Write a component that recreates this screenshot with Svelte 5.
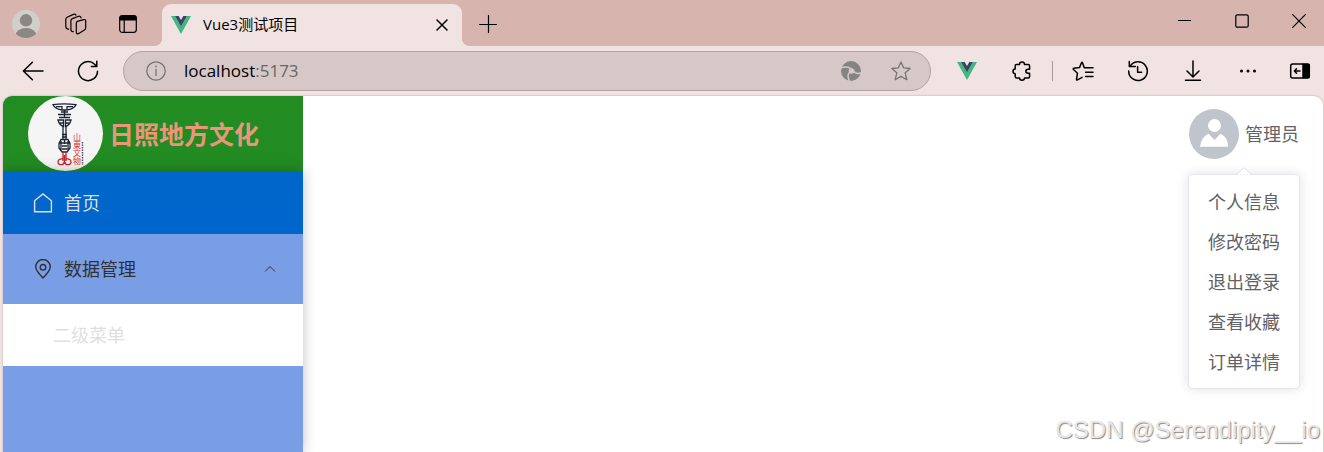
<script lang="ts">
	let submenuOpen = $state(true)
	let userMenuOpen = $state(true)

	const userMenu = ['个人信息', '修改密码', '退出登录', '查看收藏', '订单详情']
</script>

{#snippet vueLogo()}
	<svg width="20" height="18" viewBox="0 0 20 18">
		<path fill="#41b883" d="M0 0h4l6 10.4L16 0h4L10 18z" />
		<path fill="#34495e" d="M4 0h3.7L10 4l2.3-4H16l-6 10.4z" />
	</svg>
{/snippet}

<div class="browser">
	<header class="tab-strip">
		<button class="tool" aria-label="用户配置">
			<svg width="28" height="28" viewBox="0 0 28 28">
				<defs><clipPath id="profile"><circle cx="14" cy="14" r="14" /></clipPath></defs>
				<g clip-path="url(#profile)">
					<path fill="#d1cfca" d="M0 0h28v28H0z" />
					<circle cx="14" cy="10.3" r="6.2" fill="#8b8883" />
					<ellipse cx="14" cy="25.5" rx="10.5" ry="7.5" fill="#8b8883" />
				</g>
			</svg>
		</button>
		<button class="tool workspaces" aria-label="工作区">
			<svg class="line thin" width="22" height="22" viewBox="0 0 22 22">
				<path d="m12.400 8.400 6.200-1.800q2.100-.5 2.100 1.400v7q0 1.500-1.400 2.100l-5.400 3.300q-2.600 1.200-2.600-1.400v-8.700q0-1.500 1.100-1.900z" />
				<path d="M8.300 18.600q-2.400 0-2.400-2.200V7.600q0-1.500 1.500-2l6.200-2.300q2-.5 2.500 1.500" />
				<path d="M3.600 16.200q-2.800-.4-2.800-2.800V6.600q0-1.800 1.700-2.600l6-2.600q1.600-.6 2.500.7" />
			</svg>
		</button>
		<button class="tool" aria-label="标签页操作">
			<svg class="line thin" width="20" height="20" viewBox="0 0 20 20">
				<rect x="1.700" y="1.700" width="16.600" height="16.600" rx="2.500" />
				<path fill="#000" d="M2 3.500Q2 2 3.500 2h13Q18 2 18 3.500V6H2zM6.200 6v12" />
			</svg>
		</button>
		<div class="tab">
			{@render vueLogo()}
			<span class="tab-title">Vue3测试项目</span>
			<button class="tab-close" aria-label="关闭标签页">
				<svg class="line" width="12" height="12" viewBox="0 0 12 12"><path d="m1 1 10 10M11 1 1 11" /></svg>
			</button>
		</div>
		<button class="tool new-tab" aria-label="新建标签页">
			<svg class="line thin" width="18" height="18" viewBox="0 0 18 18"><path d="M9.500.5v17M.5 9.500h17" /></svg>
		</button>
		<div class="window-controls">
			<button class="tool" aria-label="最小化">
				<svg class="line thin" width="14" height="14" viewBox="0 0 14 14"><path d="M.5 6.500h12" /></svg>
			</button>
			<button class="tool" aria-label="最大化">
				<svg class="line thin" width="14" height="14" viewBox="0 0 14 14"><rect x=".8" y=".8" width="12.400" height="12.400" rx="1.500" /></svg>
			</button>
			<button class="tool" aria-label="关闭">
				<svg class="line thin" width="14" height="14" viewBox="0 0 14 14"><path d="m.7.7 12.600 12.600M13.300.7.7 13.300" /></svg>
			</button>
		</div>
	</header>

	<div class="toolbar">
		<div class="group">
			<button class="tool" aria-label="返回">
				<svg class="line" width="22" height="20" viewBox="0 0 22 20"><path d="M21 10H1.400M10.400 1.200 1.400 10l9 8.800" /></svg>
			</button>
			<button class="tool" aria-label="刷新">
				<svg class="line" width="22" height="22" viewBox="0 0 22 22">
					<path d="M20.500 11.200A9.500 9.500 0 1 1 17.600 4.300L19.700 6.400M19.800 1.200v5.400h-5.500" />
				</svg>
			</button>
		</div>
		<div class="address">
			<svg class="line grey" width="20" height="20" viewBox="0 0 20 20">
				<circle cx="10" cy="10" r="9.200" />
				<path d="M10 8.600v6" /><path d="M10 5v1" />
			</svg>
			<label class="url">
				<input value="localhost" aria-label="地址栏" />
				<span>:5173</span>
			</label>
			<button class="tool" aria-label="扩展页面">
				<svg width="20" height="20" viewBox="0 0 20 20">
					<circle cx="10" cy="10" r="10" fill="#858483" />
					<circle cx="10.500" cy="10" r="2.800" fill="#d6c8c7" />
					<g fill="none" stroke="#d6c8c7" stroke-width="1.500">
						<path d="M10.500 7.800Q6 4.600-.5 7" />
						<path d="M12.400 9.500q2 4.500 8.100 2.200" />
						<path d="M8.800 11q-3.600 4 .2 9.500" />
					</g>
				</svg>
			</button>
			<button class="tool" aria-label="收藏此页">
				<svg class="line grey" width="20" height="20" viewBox="0 0 20 20">
					<path d="m10 1 2.600 5.800 6.500.7-4.900 4.300 1.600 6.900L10 15.400l-5.800 3.300 1.600-6.900L.9 7.500l6.500-.7z" />
				</svg>
			</button>
		</div>
		<div class="group">
			<button class="tool" aria-label="Vue 开发工具">{@render vueLogo()}</button>
			<button class="tool" aria-label="扩展">
				<svg class="line" width="20" height="20" viewBox="0 0 20 20">
					<path d="M4.200 3.500h3.300q0-2.500 2.500-2.500t2.500 2.500h3.600q1.500 0 1.500 1.500v3.200h-1.500q-2.300.2-2.300 2t2.300 2h1.500V15.500q0 1.500-1.500 1.500h-3.600q0 2.200-2.500 2.200T7.500 17H4.700q-1.500 0-1.500-1.500v-2.800Q1 12.700 1 10.300t2.200-2.400V5q0-1.500 1-1.500z" />
				</svg>
			</button>
		</div>
		<span class="divider"></span>
		<div class="group">
			<button class="tool" aria-label="收藏夹">
				<svg class="line" width="22" height="20" viewBox="0 0 22 20">
					<path d="M12.200 6.600 10.600 2q-.6-1.500-1.200 0L7.500 6.600 2 7.300q-1.400.3-.5 1.200l4 3.700-1 6q0 1.300 1 .6l4.600-2.500M12.200 6.800H21M13.600 11.200H21M13.600 15.600H21" />
				</svg>
			</button>
			<button class="tool" aria-label="历史记录">
				<svg class="line" width="22" height="22" viewBox="0 0 22 22">
					<path d="M2.300 1.600V6.500h6M3 6.400A9.300 9.300 0 1 1 1.700 11M10.600 6.500v5.800h4" />
				</svg>
			</button>
			<button class="tool" aria-label="下载">
				<svg class="line" width="18" height="22" viewBox="0 0 18 22"><path d="M9 1v15.500M3 11l6 6 6-6M1.500 20.300h15" /></svg>
			</button>
			<button class="tool" aria-label="设置及其他">
				<svg width="18" height="4" viewBox="0 0 18 4"><circle cx="2.500" cy="2" r="1.500" /><circle cx="9" cy="2" r="1.500" /><circle cx="15.500" cy="2" r="1.500" /></svg>
			</button>
		</div>
		<button class="tool side-panel" aria-label="侧边栏">
			<svg class="line" width="22" height="18" viewBox="0 0 22 18">
				<rect x="1.700" y="2" width="18.600" height="14" rx="2" />
				<path fill="#000" d="M14 2.500h6v13h-6z" />
				<path d="M11 9H5.500M7.500 6.800 5.400 9l2.100 2.200" />
			</svg>
		</button>
	</div>

	<div class="page">
		<aside>
			<div class="brand">
				<svg class="brand-logo" viewBox="0 0 75 75">
					<circle cx="37.500" cy="37.500" r="37.500" fill="#f5f5f5" />
					<g fill="none" stroke="#1c2433" stroke-width="1.300">
						<path d="M25 8.700q11-1.500 23 0-2 4.500-9.500 5.300h-4Q27 13 25 8.700zM28 10.600h6v3M45 10.600h-6v3" />
						<path d="M33 16h7M30 18.500h13M36.500 14v8M31 21.500h11M30 24h5.500v6.500q-4-1-5.500-6.500zM43 24h-5.500v6.500q4-1 5.500-6.500zM32 27h3M38 27h3" />
						<path d="M35 30v13M38 30v13M34 38.500h5M34 41h5" />
						<path d="M33 43.500h7l2 4v4.500l-3 4h-5l-3-4v-4.500zM31 47h11M33 45v9M40 45v9M34 50h5M34 53h5M36.500 43v5" />
					</g>
					<g fill="none" stroke="#c8202a" stroke-width="1.300">
						<path d="M35 55v10M38 55v10M36.500 59v9" />
						<path d="M35 63q-5-.5-5 3t5 2.500q0-2 1.500-2t1.500 2q5 1 5-2.500t-5-3" />
					</g>
					<text class="seal" x="49" y="37">山東文物</text>
					<path d="M54.500 46v23" stroke="#555" stroke-width="1.500" stroke-dasharray="1.500 1" />
				</svg>
				<h1>日照地方文化</h1>
			</div>
			<nav class="menu">
				<a class="menu-item active" href="#home">
					<svg class="icon" viewBox="0 0 20 20"><path d="M1.600 7.800 10 1l8.400 6.800v11H1.600z" /></svg>
					<span>首页</span>
				</a>
				<button class="menu-item group-title" aria-expanded={submenuOpen} onclick={() => (submenuOpen = !submenuOpen)}>
					<svg class="icon" viewBox="0 0 20 20">
						<path d="M10 18.900C5.500 14.500 2.700 11.500 2.700 7.800a7.300 7.300 0 0 1 14.600 0c0 3.700-2.800 6.700-7.300 11.100z" />
						<circle cx="10" cy="8.300" r="2.800" />
					</svg>
					<span>数据管理</span>
					<svg class="arrow" class:closed={!submenuOpen} viewBox="0 0 14 14"><path d="m2 9.500 5-5 5 5" /></svg>
				</button>
				{#if submenuOpen}
					<a class="menu-item sub" href="#second"><span>二级菜单</span></a>
				{/if}
			</nav>
		</aside>

		<main>
			<div class="user">
				<button class="user-trigger" aria-expanded={userMenuOpen} onclick={() => (userMenuOpen = !userMenuOpen)}>
					<svg width="50" height="50" viewBox="0 0 50 50">
						<circle cx="25" cy="25" r="25" fill="#c0c4cc" />
						<circle cx="25.500" cy="16.500" r="6.500" fill="#fff" />
						<path fill="#fff" d="M11 37.700q1-9.500 8.500-13l6 6.300 6-6.300q7.500 3.500 7.700 13z" />
					</svg>
					<span>管理员</span>
				</button>
				{#if userMenuOpen}
					<div class="dropdown">
						{#each userMenu as item}
							<button class="dropdown-item">{item}</button>
						{/each}
					</div>
				{/if}
			</div>
		</main>
	</div>

	<div class="watermark">CSDN @Serendipity__io</div>
</div>

<style>
	:global(body) {
		margin: 0;
	}

	.browser {
		position: relative;
		display: flex;
		flex-direction: column;
		min-height: 100vh;
		overflow: hidden;

		background: #f1e3e1;
		color: #606266;
		font-family: "Open Sans", "Noto Sans CJK SC", sans-serif;
		font-size: 18px;
	}

	button {
		padding: 0;
		border: 0;
		background: none;
		color: inherit;
		font: inherit;
		cursor: pointer;
	}

	svg {
		display: block;
		flex-shrink: 0;
	}

	.line {
		fill: none;
		stroke: #000;
		stroke-width: 1.5;
		stroke-linecap: round;
		stroke-linejoin: round;
	}

	.thin {
		stroke-width: 1.2;
	}

	.grey {
		stroke: #777473;
		stroke-width: 1.3;
	}

	.tool {
		display: flex;
		align-items: center;
		justify-content: center;
		flex-shrink: 0;
		width: 40px;
		height: 40px;
	}

	.tab-strip {
		display: flex;
		align-items: center;
		gap: 11px;
		height: 46px;
		padding: 2px 5px 0 6px;
		box-sizing: border-box;
		background: #d8b4ae;
	}

	.workspaces {
		margin: 0 1px 0 -1px;
	}

	.tab {
		position: relative;
		display: flex;
		align-items: center;
		align-self: flex-end;
		gap: 12px;
		width: 300px;
		height: 42px;
		margin-left: 3px;
		padding: 0 14px 0 9px;
		box-sizing: border-box;
		border-radius: 9px 9px 0 0;
		background: #f1e3e1;
		color: #000;
		font-size: 15px;
	}

	.tab::before,
	.tab::after {
		content: "";
		position: absolute;
		bottom: 0;
		width: 8px;
		height: 8px;
	}

	.tab::before {
		right: 100%;
		background: radial-gradient(circle at 0 0, transparent 8px, #f1e3e1 8px);
	}

	.tab::after {
		left: 100%;
		background: radial-gradient(circle at 100% 0, transparent 8px, #f1e3e1 8px);
	}

	.tab-title {
		flex: 1;
		padding-bottom: 3px;
	}

	.new-tab {
		margin-left: -5px;
	}

	.window-controls {
		display: flex;
		gap: 17px;
		margin-left: auto;
		padding-bottom: 6px;
	}

	.toolbar {
		display: flex;
		align-items: center;
		gap: 10px;
		height: 50px;
		padding: 0 4px 0 13px;
		box-sizing: border-box;
	}

	.group {
		display: flex;
		gap: 15px;
	}

	.side-panel {
		margin-left: 2px;
	}

	.address {
		display: flex;
		align-items: center;
		flex: 1;
		gap: 10px;
		height: 40px;
		margin: 0 6px 0 5px;
		padding: 0 9px 0 22px;
		box-sizing: border-box;
		border: 1px solid #b3a3a2;
		border-radius: 20px;
		background: #d6c8c7;
	}

	.url {
		display: flex;
		flex: 1;
		padding: 0 0 2px 8px;
		color: #666;
		font-size: 17px;
	}

	.url input {
		field-sizing: content;
		padding: 0;
		border: 0;
		outline: 0;
		background: none;
		color: #000;
		font: inherit;
	}

	.divider {
		width: 1px;
		height: 20px;
		background: #a89a99;
	}

	.page {
		display: flex;
		flex: 1;
		margin: 0 1px 0 3px;
		overflow: hidden;
		border-radius: 9px 9px 0 0;
		background: #fff;
		box-shadow: 0 0 2px rgba(80, 40, 40, 0.4);
	}

	aside {
		display: flex;
		flex-direction: column;
		width: 300px;
		flex-shrink: 0;
	}

	.brand {
		display: flex;
		align-items: center;
		gap: 6px;
		padding-left: 25px;
		background: #228b22;
	}

	.brand-logo {
		width: 75px;
		height: 75px;
	}

	.seal {
		fill: #d5303a;
		font-family: "Noto Sans CJK SC", sans-serif;
		font-size: 8px;
		writing-mode: vertical-rl;
	}

	h1 {
		margin: 0;
		color: #e9967a;
		font-size: 25px;
		line-height: 36px;
	}

	.menu {
		display: flex;
		flex-direction: column;
		flex: 1;
		background: #7a9ee6;
		box-shadow: 0 0 12px rgba(0, 0, 0, 0.25);
	}

	.menu-item {
		display: flex;
		align-items: center;
		gap: 11px;
		height: 62px;
		padding: 0 26px 0 30px;
		color: #303133;
		text-decoration: none;
	}

	.menu-item span,
	.user-trigger span {
		padding-bottom: 2px;
	}

	.menu-item.active {
		height: 63px;
		background: #0066cc;
		color: #dfdfdf;
	}

	.menu-item.group-title {
		height: 70px;
	}

	.menu-item.sub {
		padding-left: 50px;
		background: #fff;
		color: #dfdfdf;
	}

	.icon,
	.arrow {
		width: 20px;
		height: 20px;
		fill: none;
		stroke: currentColor;
		stroke-width: 1.4;
	}

	.arrow {
		width: 14px;
		height: 14px;
		margin-left: auto;
		stroke-width: 1;
	}

	.arrow.closed {
		transform: rotate(180deg);
	}

	main {
		display: flex;
		flex: 1;
		align-items: flex-start;
		justify-content: flex-end;
		padding: 13px 24px 0;
	}

	.user {
		position: relative;
	}

	.user-trigger {
		display: flex;
		align-items: center;
		gap: 6px;
	}

	.dropdown {
		position: absolute;
		top: 65px;
		right: -1px;
		display: flex;
		flex-direction: column;
		padding: 6px 19px 7px;
		border: 1px solid #e4e7ed;
		border-radius: 4px;
		background: #fff;
		box-shadow: 0 0 12px rgba(0, 0, 0, 0.12);
	}

	.dropdown::before {
		content: "";
		position: absolute;
		top: -6px;
		left: calc(50% - 6px);
		width: 10px;
		height: 10px;
		border: 1px solid #e4e7ed;
		border-right-color: transparent;
		border-bottom-color: transparent;
		border-radius: 2px 0 0 0;
		background: linear-gradient(135deg, #fff 50%, transparent 50%);
		transform: rotate(45deg);
	}

	.dropdown-item {
		height: 40px;
		white-space: nowrap;
	}

	.dropdown-item:hover {
		color: #0066cc;
	}

	.watermark {
		position: absolute;
		right: 4px;
		bottom: 6px;
		color: #e6e6e6;
		font-family: "Liberation Sans", Arial, sans-serif;
		font-size: 24px;
		line-height: 32px;
		text-shadow: 1px 1px 1px #8a8a8a;
		pointer-events: none;
	}
</style>
